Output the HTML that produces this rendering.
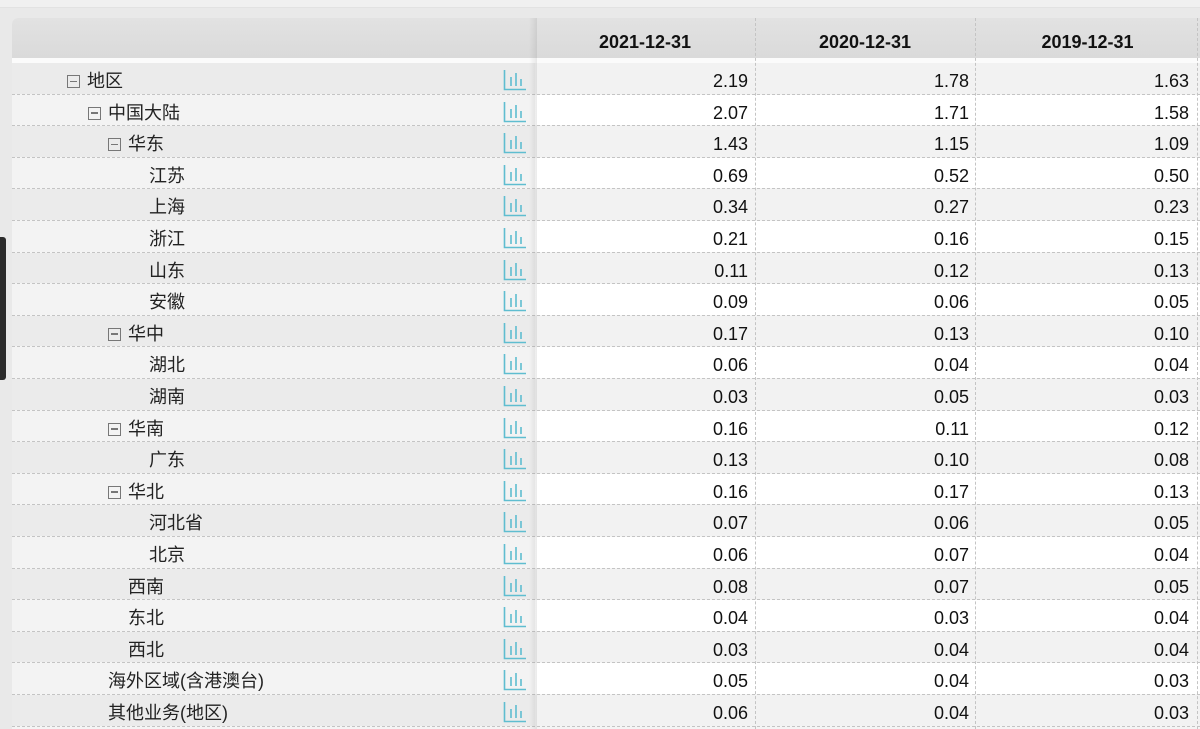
<!DOCTYPE html>
<html><head><meta charset="utf-8"><style>
*{margin:0;padding:0;box-sizing:border-box}
body{width:1200px;height:729px;overflow:hidden;background:#e9e9e9;font-family:"Liberation Sans","Noto Sans CJK SC",sans-serif;position:relative}
.top{position:absolute;left:0;top:0;width:1200px;height:8px;background:#f0f0f0;border-bottom:1px solid #e2e2e2}
.wrap{position:absolute;left:12px;top:18px;width:1188px;height:711px;background:#f4f4f4;border-top-left-radius:6px;overflow:hidden}
.hdr{position:absolute;left:0;top:0;width:1188px;height:40px;background:linear-gradient(#e2e2e2,#dadada)}
.hdr div{position:absolute;top:0;height:40px;line-height:48px;text-align:center;font-weight:bold;font-size:18px;color:#111}
.strip{position:absolute;left:0;top:40px;width:1188px;height:5px;background:#fbfbfb}
.row{position:absolute;left:0;width:1188px;height:31.6px;border-bottom:1px dashed #c4c4c4}
.row .l{position:absolute;left:0;top:0;width:523px;height:100%}
.row .d{position:absolute;left:523px;top:0;width:665px;height:100%}
.odd .l{background:#ebebeb}.even .l{background:#f3f3f3}
.odd .d{background:#f2f2f2}.even .d{background:#fff}
.lab{position:absolute;top:2px;line-height:32px;font-size:18px;color:#222;white-space:nowrap}
.box{display:inline-block;width:13px;height:13px;border:1.5px solid #777;position:relative;margin-right:7px;vertical-align:-1px}
.box:after{content:"";position:absolute;left:2px;right:2px;top:4.5px;height:1.5px;background:#777}
.num{position:absolute;top:2px;line-height:33px;font-size:18px;color:#111;text-align:right;width:200px}
.ic{position:absolute;left:491px;top:6px}
.vl{position:absolute;top:0;bottom:0;border-left:1px dashed #c4c4c4}
.sh{position:absolute;left:517px;top:0;width:8px;height:711px;background:linear-gradient(90deg,rgba(0,0,0,0),rgba(0,0,0,.08));}
.tab{position:absolute;left:0;top:237px;width:6px;height:143px;background:#2b2b2b;border-radius:0 3px 3px 0}
</style></head><body>
<div class="top"></div>
<div class="tab"></div>
<div class="wrap">
<div class="hdr"><div style="left:523px;width:220px">2021-12-31</div><div style="left:743px;width:220px">2020-12-31</div><div style="left:963px;width:225px">2019-12-31</div></div>
<div class="strip"></div>
<div id="rows"></div>
<div class="vl" style="left:743px"></div><div class="vl" style="left:963px"></div><div class="vl" style="left:1185px"></div>
<div class="sh"></div>
</div>
<script>
var R=[["地区",55,1,"2.19","1.78","1.63"],["中国大陆",76,1,"2.07","1.71","1.58"],["华东",96,1,"1.43","1.15","1.09"],["江苏",137,0,"0.69","0.52","0.50"],["上海",137,0,"0.34","0.27","0.23"],["浙江",137,0,"0.21","0.16","0.15"],["山东",137,0,"0.11","0.12","0.13"],["安徽",137,0,"0.09","0.06","0.05"],["华中",96,1,"0.17","0.13","0.10"],["湖北",137,0,"0.06","0.04","0.04"],["湖南",137,0,"0.03","0.05","0.03"],["华南",96,1,"0.16","0.11","0.12"],["广东",137,0,"0.13","0.10","0.08"],["华北",96,1,"0.16","0.17","0.13"],["河北省",137,0,"0.07","0.06","0.05"],["北京",137,0,"0.06","0.07","0.04"],["西南",116,0,"0.08","0.07","0.05"],["东北",116,0,"0.04","0.03","0.04"],["西北",116,0,"0.03","0.04","0.04"],["海外区域(含港澳台)",96,0,"0.05","0.04","0.03"],["其他业务(地区)",96,0,"0.06","0.04","0.03"]];
var ic='<svg class="ic" width="24" height="22" viewBox="0 0 24 22" fill="none" stroke="#5fbdd0" stroke-width="1.6"><path d="M1.5 1v19.5H23"/><path d="M8 8v9M13 4v13M18 10v7"/></svg>';
var h="";
R.forEach(function(r,i){var t=45+i*31.6;
h+='<div class="row '+(i%2?'even':'odd')+'" style="top:'+t+'px"><div class="l"><span class="lab" style="left:'+r[1]+'px">'+(r[2]?'<span class="box"></span>':'')+r[0]+'</span>'+ic+'</div><div class="d"><span class="num" style="left:13px">'+r[3]+'</span><span class="num" style="left:234px">'+r[4]+'</span><span class="num" style="left:454px">'+r[5]+'</span></div></div>';});
document.getElementById("rows").innerHTML=h;
</script>
</body></html>
